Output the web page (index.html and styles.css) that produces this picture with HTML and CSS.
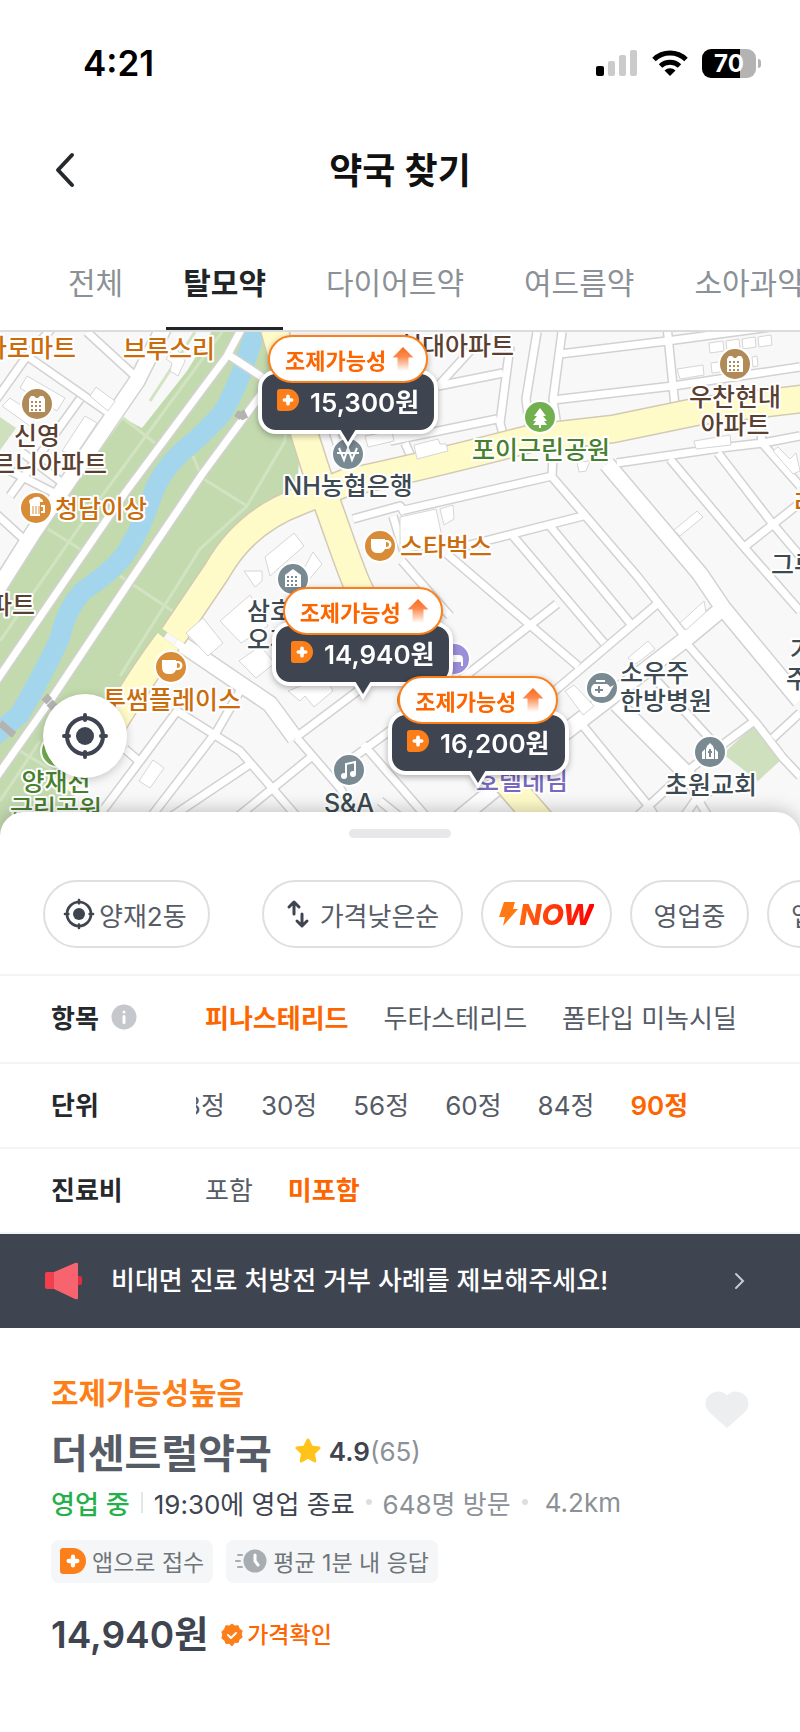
FILE: index.html
```html
<!DOCTYPE html>
<html lang="ko">
<head>
<meta charset="utf-8">
<meta name="viewport" content="width=device-width, initial-scale=1">
<title>약국 찾기</title>
<link rel="stylesheet" href="styles.css">
</head>
<body>

<!-- shared icons -->
<svg class="sprite" aria-hidden="true">
    <defs>
        <linearGradient id="arrowFade" x1="0" y1="0" x2="0" y2="1">
            <stop offset="0" stop-color="#fb6a1c"/>
            <stop offset="0.4" stop-color="#fc8a4c"/>
            <stop offset="1" stop-color="#fff"/>
        </linearGradient>
    </defs>
    <symbol id="i-up" viewBox="0 0 22 24">
        <path d="M11 0 21.500 10.500h-5V24h-11V10.500h-5z" fill="url(#arrowFade)"/>
    </symbol>
    <symbol id="i-app" viewBox="0 0 24 24">
        <path d="M3 0h9a12 12 0 0 1 0 24H3a3 3 0 0 1-3-3V3a3 3 0 0 1 3-3z" fill="#fd7f1a"/>
        <path d="M12 8v8M8 12h8" stroke="#fff" stroke-width="4" stroke-linecap="round"/>
    </symbol>
    <symbol id="i-target" viewBox="0 0 48 48">
        <g fill="none" stroke="#3e4450" stroke-width="4" stroke-linecap="round">
            <circle cx="24" cy="24" r="18"/>
            <path d="M24 3v5M24 40v5M3 24h5M40 24h5"/>
        </g>
        <circle cx="24" cy="24" r="9" fill="#3e4450"/>
    </symbol>
    <symbol id="i-tip" viewBox="0 0 26 20">
        <path d="M2 1 13 19 24 1z" fill="#fff"/>
        <path d="M5 0h16l-8 13z" fill="#3e4450"/>
    </symbol>
</svg>

<div class="status">
    <span class="clock">4:21</span>
    <div class="status-icons">
        <svg width="42" height="28" viewBox="0 0 42 28">
            <rect x="0" y="17" width="8" height="10" rx="2"/>
            <g fill="#cbcbcb">
                <rect x="12" y="12" width="7" height="15" rx="2"/>
                <rect x="23" y="6" width="7" height="21" rx="2"/>
                <rect x="34" y="1" width="7" height="26" rx="2"/>
            </g>
        </svg>
        <svg width="36" height="28" viewBox="0 0 36 28">
            <g fill="none" stroke="#000" stroke-width="5">
                <path d="M2 10.500a23 23 0 0 1 32 0"/>
                <path d="M8.500 17a14 14 0 0 1 19 0"/>
            </g>
            <path d="M12.500 21.500a8 8 0 0 1 11 0L18 27z"/>
        </svg>
        <div class="battery"><span>70</span></div>
    </div>
</div>

<header class="topbar">
    <button class="back" aria-label="뒤로">
        <svg width="22" height="36" viewBox="0 0 22 36"><path d="M18 3 4 18l14 15" fill="none" stroke="#26292c" stroke-width="4" stroke-linecap="round" stroke-linejoin="round"/></svg>
    </button>
    <h1>약국 찾기</h1>
</header>

<nav class="tabs">
    <a href="#">전체</a>
    <a href="#" class="active">탈모약</a>
    <a href="#">다이어트약</a>
    <a href="#">여드름약</a>
    <a href="#">소아과약</a>
</nav>

<div class="map">
    <svg class="map-canvas" viewBox="0 331 800 505" preserveAspectRatio="xMidYMin slice">
        <defs>
            <g id="narrow">
                <path d="M560 353 667 340 800 322M553 399 673 385 800 366M667 325 675 405M537 331 526 398 530 430M562 331 553 399 558 432"/>
                <path d="M510 345 500 422 505 440M438 385 503 372M390 440 497 418M405 442 412 458M400 510 552 475 553 455M553 477 637 575 683 633"/>
                <path d="M617 462 720 447 763 442 800 435M670 458 743 545 800 610M718 452 772 522 800 555M760 420 762 442 800 485M743 547 800 502"/>
                <path d="M458 547 583 515M550 525 630 622M513 535 604 642M447 553 578 665M402 560 450 615M440 695 557 603M470 350 438 385"/>
                <path d="M480 760 557 688 657 603M657 680 712 740M687 643 757 723 783 757 800 775M600 850 683 773 757 718M773 737 800 712M660 850 697 797 717 830"/>
                <path d="M575 715 647 803 665 830M500 770 545 820M560 740 520 790"/>
                <path d="M297 737 340 787 365 830M295 737 367 683 400 655M240 690 217 730 140 830M177 710 240 750 305 825M177 710 140 760 95 820M125 748 141 762"/>
                <path d="M165 820 250 763M235 818 310 757M363 743 430 820M335 770 410 715M380 800 480 880M333 430 348 475M368 440 410 430M353 518 400 505 405 512M393 515 405 555"/>
                <path d="M87 331 135 375 138 385M27 355 113 415M27 355-5 400M80 398 10 495M-5 462 70 500M-5 512 28 542M60 480 20 450M60 318 27 355"/>
            </g>
            <g id="wide">
                <path d="M167 320 137 380 113 415 33 532-10 600"/>
                <path d="M607 463 700 573 723 607 800 700"/>
                <path d="M450 825 560 735 590 712 687 637 723 607"/>
                <path d="M617 703 687 773 705 800"/>
                <path d="M177 640 270 703 295 737"/>
            </g>
            <g id="path">
                <path d="M243 325 227 355 125 492 68 575-5 682M275 372 262 392 203 472 128 583 50 700-10 785M227 353 262 376"/>
            </g>
            <g id="highway">
                <path d="M272 320C290 385 305 440 330 510S355 585 380 625L450 715 545 825"/>
                <path d="M173 635 217 570Q245 520 300 500L345 482Q430 464 533 437L613 428 700 410 810 397" />
            </g>
        </defs>
        <rect y="325" width="800" height="515" fill="#f8f8f8"/>
        <path d="M215 325H268L300 445 296 505 255 520 220 555 165 635 115 715 50 840H-5V600L60 505 123 417 142 427 187 370z" fill="#c3daae"/>
        <path d="M0 416 16 427-2 452zM753 725 782 758 758 780 723 753z" fill="#cfe0bf"/>
        <g fill="none" stroke="#d2e3c2" stroke-width="3">
            <path d="M123 417 155 442M193 455 202 477 247 505 285 440 287 400M247 505 200 548 180 580 120 675M48 528 83 550M120 575 180 615M20 750 70 780M222 331 80 525 0 640M195 331 150 400M0 800 40 740"/>
        </g>
        <!-- river -->
        <path d="M257 325 245 362Q232 398 220 415L197 438Q162 465 152 495T130 545Q120 565 83 590 65 610 60 637 45 670 20 713L-8 737" fill="none" stroke="#a3d6ec" stroke-width="20"/>
        <use href="#narrow" class="casing w11"/>
        <use href="#wide" class="casing w18"/>
        <use href="#path" class="casing w11"/>
        <use href="#narrow" class="road w7"/>
        <use href="#wide" class="road w15"/>
        <use href="#path" class="road w7"/>
        <path d="M120 700 62 785" stroke="#fffbc9" stroke-width="20"/>
        <use href="#highway" class="casing yellow-edge"/>
        <path d="M168 640Q145 670 110 728" class="casing yellow-edge"/>
        <path d="M168 640Q145 670 110 728" class="road yellow"/>
        <use href="#highway" class="road yellow"/>
        <path d="M0 722 14 734M241 410l4 8M237 417l4-6" stroke="#b3b3b0" stroke-width="7"/>
        <path d="M44 701l6-6M49 707l6-6" stroke="#b3b3b0" stroke-width="7"/>
        <!-- buildings -->
        <g fill="#fff" stroke="#d6d6d6">
            <path d="M20 387 27 375 65 397 57 410zM10 397 2 405 30 425 37 415zM62 450 85 415 97 422 75 455zM90 395 96 386 115 400 108 410z"/>
            <path d="M166 358 172 362 170 370 178 375 185 360 175 345zM265 556 294 532 304 545 270 575zM300 575 313 551 322 563 308 580z"/>
            <path d="M677 368 703 364 704 374 680 378zM694 440 730 434 731 444 696 448zM709 342 723 340 724 350 710 352zM726 340 739 338 740 348 727 350zM742 338 755 336 756 346 743 348zM758 336 771 334 772 344 759 346zM711 362 719 361 720 371 712 372zM752 356 757 355 758 365 753 366z"/>
            <path d="M414 444 438 438 440 443 446 443 448 450 417 458zM400 516 436 508 444 545 400 552zM440 508 453 504 454 518 444 524zM577 461 590 460 586 470 579 471zM674 529 697 510 703 516 680 535z"/>
            <path d="M680 622 704 600 706 611 686 629zM628 657 648 640 655 648 636 663zM565 690 574 684 594 705 583 714zM773 450 778 446 790 458 796 452 800 470 793 473z"/>
            <path d="M186 632 203 617 223 642 208 655zM220 620 250 594 268 625 241 642zM239 660 260 645 275 662 256 677zM288 690 300 700 305 695 314 706 333 690 325 675zM139 780 153 759 164 767 150 787z"/>
            <path d="M365 435 392 430 394 440 368 446zM244 570 262 570 262 580 255 586z"/>
        </g>
        <!-- place icons -->
        <g stroke="#fff" stroke-width="2">
            <g fill="#b08a57"><circle cx="37" cy="403" r="16"/><circle cx="735" cy="363" r="16"/></g>
            <g fill="#d98c38"><circle cx="36" cy="507" r="16"/><circle cx="380" cy="545" r="16"/><circle cx="171" cy="666" r="16"/><circle cx="412" cy="699" r="16"/></g>
            <g fill="#72b04f"><circle cx="540" cy="416" r="16"/><circle cx="57" cy="750" r="16"/></g>
            <g fill="#7a8a92"><circle cx="348" cy="453" r="16"/><circle cx="293" cy="578" r="16"/><circle cx="349" cy="769" r="16"/><circle cx="602" cy="687" r="16"/><circle cx="710" cy="751" r="16"/></g>
            <circle cx="454" cy="658" r="16" fill="#9b8fdb"/>
        </g>
        <g fill="#fff">
            <path id="flat" d="M29 411V398l2-3h3l2 2h2l2-2h3l2 3v13z"/>
            <use href="#flat" x="698" y="-40"/>
            <path d="M285 586V574l8-6 8 6v12z"/>
            <path d="M29 501q0-3 3-3 1-2 4-2 4-1 5 2 2 0 2 3h-3v14H30v-12zM41 504h4v8h-4v-2h2v-4h-2z"/>
            <path id="cup" fill-rule="evenodd" d="M371 538h14v1h2a4 4 0 0 1 0 9h-2q-2 4-5 4h-3q-6 0-6-7zM386 541v5q3 0 3-2.500t-3-2.500z"/>
            <use href="#cup" x="-209" y="121"/>
            <path d="M540 407 546 415h-3l4 5h-3l3 4h-6v3h-2v-3h-6l3-4h-3l4-5h-3z"/>
            <path d="M447 654h12q4 0 4 4v7h-2v-4h-14z"/>
            <path d="M596 679h9v2h-9zM594 683h13q2 1 3 3l4-2-3 5q-3 7-7 7h-7q-6-1-6-7 0-4 3-6z"/>
            <path d="M702 758v-7l3-3v10zM706 758V748q1-4 4-6 3 2 4 6v10zM715 758v-10l3 3v7z"/>
        </g>
        <g stroke="#b08a57" stroke-width="2" stroke-dasharray="2 2">
            <path d="M31 401h12M31 405h12M31 409h12M729 361h12M729 365h12M729 369h12"/>
            <path d="M287 576h12M287 580h12M287 584h12" stroke="#7a8a92"/>
        </g>
        <path d="M33 505v8M36 505v8M39 505v8" stroke="#d98c38"/>
        <path d="M339 447l5 12 4-12 4 12 5-12M337 452h22" fill="none" stroke="#fff" stroke-width="2"/>
        <path d="M346 775v-12l9-2v11" fill="none" stroke="#fff" stroke-width="2"/>
        <circle cx="344" cy="775" r="3" fill="#fff"/><circle cx="353" cy="773" r="3" fill="#fff"/>
        <path d="M599 685v7M595 689h8M710 748v8M708 751h4" stroke="#7a8a92" stroke-width="2"/>
        <!-- place names -->
        <g class="place">
            <g class="food">
                <text x="76" y="356" class="end">하나로마트</text>
                <text x="123" y="357">브루스리</text>
                <text x="55" y="517">청담이상</text>
                <text x="400" y="555">스타벅스</text>
                <text x="241" y="708" class="end">투썸플레이스</text>
                <text x="794" y="511">라</text>
            </g>
            <g class="home">
                <text x="514" y="354" class="end">현대아파트</text>
                <text x="37" y="444" class="mid">신영</text>
                <text x="107" y="472" class="end">르니아파트</text>
                <text x="35" y="613" class="end">아파트</text>
                <text x="735" y="405" class="mid">우찬현대</text>
                <text x="735" y="433" class="mid">아파트</text>
            </g>
            <g class="park">
                <text x="541" y="458" class="mid">포이근린공원</text>
                <text x="56" y="790" class="mid">양재천</text>
                <text x="56" y="817" class="mid">근린공원</text>
            </g>
            <g class="office">
                <text x="348" y="494" class="mid">NH농협은행</text>
                <text x="247" y="619">삼호</text>
                <text x="247" y="648">오피</text>
                <text x="349" y="811" class="mid">S&amp;A</text>
                <text x="620" y="681">소우주</text>
                <text x="620" y="709">한방병원</text>
                <text x="711" y="793" class="mid">초원교회</text>
                <text x="771" y="573">그루</text>
                <text x="790" y="658">가</text>
                <text x="786" y="687">주</text>
            </g>
            <text x="522" y="789" class="mid hotel">호텔데님</text>
        </g>
    </svg>

    <button class="pin pin-a">
        <span class="pin-tag">조제가능성<svg width="22" height="24"><use href="#i-up"/></svg></span>
        <span class="pin-price"><svg width="22" height="22"><use href="#i-app"/></svg>15,300원</span>
        <svg class="pin-tip" width="26" height="20"><use href="#i-tip"/></svg>
    </button>
    <button class="pin pin-b">
        <span class="pin-tag">조제가능성<svg width="22" height="24"><use href="#i-up"/></svg></span>
        <span class="pin-price"><svg width="22" height="22"><use href="#i-app"/></svg>14,940원</span>
        <svg class="pin-tip" width="26" height="20"><use href="#i-tip"/></svg>
    </button>
    <button class="pin pin-c">
        <span class="pin-tag">조제가능성<svg width="22" height="24"><use href="#i-up"/></svg></span>
        <span class="pin-price"><svg width="22" height="22"><use href="#i-app"/></svg>16,200원</span>
        <svg class="pin-tip" width="26" height="20"><use href="#i-tip"/></svg>
    </button>

    <button class="locate" aria-label="내 위치"><svg width="48" height="48"><use href="#i-target"/></svg></button>
</div>

<main class="sheet">
    <div class="handle"></div>

    <div class="chips">
        <button class="chip town"><svg width="32" height="32"><use href="#i-target"/></svg>양재2동</button>
        <span class="chips-line"></span>
        <button class="chip">
            <svg width="24" height="30" viewBox="0 0 24 30" fill="none" stroke="#3e4450" stroke-width="3" stroke-linecap="round" stroke-linejoin="round"><path d="M8 15V3M3 8l5-5 5 5M16 15v12M11 22l5 5 5-5"/></svg>가격낮은순
        </button>
        <button class="chip now"><svg width="20" height="24" viewBox="0 0 20 24"><path d="M5 0h11l-2 7h5L4 24l2-9H0z" fill="#ff7a14"/></svg><span>NOW</span></button>
        <button class="chip">영업중</button>
        <button class="chip">앱접수</button>
    </div>

    <div class="filter tall">
        <span class="filter-name">항목
            <svg width="26" height="26" viewBox="0 0 26 26"><circle cx="13" cy="13" r="12.500" fill="#c4c8cc"/><path d="M13 12.500v6M13 8v.1" stroke="#fff" stroke-width="3" stroke-linecap="round"/></svg>
        </span>
        <div class="options">
            <button class="on">피나스테리드</button>
            <button>두타스테리드</button>
            <button>폼타입 미녹시딜</button>
        </div>
    </div>
    <div class="filter">
        <span class="filter-name">단위</span>
        <div class="options scrolled">
            <button>28정</button>
            <button>30정</button>
            <button>56정</button>
            <button>60정</button>
            <button>84정</button>
            <button class="on">90정</button>
        </div>
    </div>
    <div class="filter">
        <span class="filter-name">진료비</span>
        <div class="options">
            <button>포함</button>
            <button class="on">미포함</button>
        </div>
    </div>

    <a href="#" class="banner">
        <svg width="38" height="38" viewBox="0 0 38 38">
            <rect x="30" y="14" width="7" height="9" rx="2" fill="#e02d3c"/>
            <path d="M2 10h10v17H2a2 2 0 0 1-2-2V12a2 2 0 0 1 2-2z" fill="#f23f4e"/>
            <path d="M9 10 30 1q3-1 3 1v34q0 2-3 1L9 27z" fill="#f7646f"/>
        </svg>
        <span>비대면 진료 처방전 거부 사례를 제보해주세요!</span>
        <svg width="12" height="20" viewBox="0 0 12 20"><path d="M2 3l7 7-7 7" fill="none" stroke="#c9ccd1" stroke-width="2" stroke-linecap="round"/></svg>
    </a>

    <article class="card">
        <div class="card-top">
            <strong class="chance">조제가능성높음</strong>
            <button class="like" aria-label="찜">
                <svg width="44" height="38" viewBox="0 0 44 38"><path d="M22 5.500A12.500 12.500 0 0 1 43.500 13.500Q43.500 18 40 22L22 38 4 22Q.5 18 .5 13.500A12.500 12.500 0 0 1 22 5.500z" fill="#edeef0"/></svg>
            </button>
        </div>
        <div class="name-row">
            <h2>더센트럴약국</h2>
            <svg width="26" height="26" viewBox="0 0 26 26"><path d="M13 2l3.300 7 7.700 1-5.600 5.400 1.400 7.600-6.800-3.700L6.200 23l1.400-7.600L2 10l7.700-1z" fill="#ffc31a" stroke="#ffc31a" stroke-width="3" stroke-linejoin="round"/></svg>
            <span class="score">4.9</span><span class="count">(65)</span>
        </div>
        <div class="info">
            <span class="open">영업 중</span>
            <i class="bar"></i>
            <span>19:30에 영업 종료</span>
            <i class="dot"></i>
            <span class="muted">648명 방문</span>
            <i class="dot far"></i>
            <span class="muted">4.2km</span>
        </div>
        <div class="tags">
            <span class="tag"><svg width="26" height="26"><use href="#i-app"/></svg>앱으로 접수</span>
            <span class="tag">
                <svg width="32" height="26" viewBox="0 0 32 26"><circle cx="20" cy="13" r="11.500" fill="#a8adb1"/><path d="M20 7v6l3 4" fill="none" stroke="#fff" stroke-width="3" stroke-linecap="round" stroke-linejoin="round"/><path d="M3 7h4M1 13h4M3 19h4" stroke="#a8adb1" stroke-width="2" stroke-linecap="round"/></svg>평균 1분 내 응답
            </span>
        </div>
        <div class="price-row">
            <strong>14,940원</strong>
            <span class="checked">
                <svg width="24" height="24" viewBox="0 0 24 24"><path d="M12 1l2.800 2 3.400-.2 1.100 3.200 2.900 1.800-1 3.200 1 3.300-2.900 1.900-1.100 3.200-3.400-.1L12 23l-2.800-2.700-3.400.1-1.100-3.200-2.900-1.900 1-3.300-1-3.200L4.700 6l1.100-3.200 3.400.2z" fill="#fd7f1a" stroke="#fd7f1a" stroke-linejoin="round"/><path d="M8 12l3 3 5-5" fill="none" stroke="#fff" stroke-width="2" stroke-linecap="round" stroke-linejoin="round"/></svg>가격확인
            </span>
        </div>
    </article>
</main>

</body>
</html>
```
FILE: styles.css
```css
* {
    box-sizing: border-box;
}

body {
    margin: 0;
    font-family: Inter, "Noto Sans CJK KR", sans-serif;
    font-size: 26px;
    color: #3e4450;
    background: #fff;
    overflow-x: hidden;
}

button {
    font: inherit;
    color: inherit;
    background: none;
    border: none;
    padding: 0;
    cursor: pointer;
    white-space: nowrap;
}

a {
    color: inherit;
    text-decoration: none;
}

svg {
    display: block;
    flex: none;
}

.sprite {
    position: absolute;
    width: 0;
    height: 0;
}

/* status bar */
.status {
    display: flex;
    justify-content: space-between;
    align-items: center;
    height: 126px;
    padding: 0 40px 0 83px;
    color: #000;
}

.clock {
    font-size: 35px;
    font-weight: 600;
}

.status-icons {
    display: flex;
    align-items: center;
    gap: 14px;
}

.battery {
    position: relative;
    width: 54px;
    height: 29px;
    margin-right: 4px;
    border-radius: 9px;
    background: linear-gradient(to right, #000 70%, #b3b3b3 70%);
    color: #fff;
    font-size: 24px;
    font-weight: 700;
    line-height: 29px;
    text-align: center;
}

.battery::after {
    content: '';
    position: absolute;
    right: -5px;
    top: 10px;
    width: 3px;
    height: 9px;
    border-radius: 0 4px 4px 0;
    background: #b3b3b3;
}

/* header */
.topbar {
    display: grid;
    grid-template-columns: 48px 1fr 48px;
    align-items: center;
    height: 88px;
    padding: 0 54px;
}

.topbar h1 {
    margin: 0;
    padding-bottom: 4px;
    font-size: 36px;
    font-weight: 600;
    text-align: center;
    color: #111;
}

.tabs {
    display: flex;
    gap: 26px;
    height: 118px;
    padding: 46px 0 0 51px;
    border-bottom: 2px solid #dadddd;
    overflow: hidden;
}

.tabs a {
    flex: none;
    height: 70px;
    padding: 0 17px;
    font-size: 30px;
    line-height: 46px;
    color: #8b9196;
}

.tabs .active {
    font-weight: 600;
    color: #222528;
    border-bottom: 3px solid #222528;
}

/* map */
.map {
    position: relative;
    height: 505px;
    overflow: hidden;
}

.map-canvas {
    width: 100%;
    height: 100%;
}

.casing,
.road {
    fill: none;
    stroke-linejoin: round;
}

.casing {
    stroke: #d2d2d2;
}

.road {
    stroke: #fff;
}

.w7 {
    stroke-width: 7px;
}

.w11 {
    stroke-width: 10px;
}

.w15 {
    stroke-width: 15px;
}

.w18 {
    stroke-width: 18px;
}

.yellow-edge {
    stroke: #d3cab4;
    stroke-width: 29px;
}

.yellow {
    stroke: #fffbc9;
    stroke-width: 26px;
}

.place text {
    font-size: 25px;
    font-weight: 500;
    stroke: #fff;
    stroke-width: 4px;
    stroke-linejoin: round;
    paint-order: stroke;
}

.mid {
    text-anchor: middle;
}

.end {
    text-anchor: end;
}

.food {
    fill: #cb6c0c;
}

.home {
    fill: #5a4030;
}

.park {
    fill: #47802f;
}

.office {
    fill: #3c4a52;
}

.hotel {
    fill: #7869bd;
}

.pin {
    position: absolute;
    display: flex;
    flex-direction: column;
    align-items: center;
    filter: drop-shadow(0 2px 3px rgba(0, 0, 0, 0.3));
}

.pin-a {
    left: 258px;
    top: 3px;
}

.pin-b {
    left: 272px;
    top: 255px;
}

.pin-c {
    left: 388px;
    top: 344px;
}

.pin-tag {
    position: relative;
    z-index: 1;
    display: flex;
    align-items: center;
    gap: 6px;
    height: 48px;
    margin-bottom: -13px;
    padding: 0 12px 0 15px;
    border: 2px solid #fd7f1a;
    border-radius: 24px;
    background: #fff;
    color: #fd6500;
    font-size: 22px;
    font-weight: 700;
}

.pin-price {
    display: flex;
    align-items: center;
    gap: 11px;
    height: 64px;
    padding: 0 15px 4px;
    border: 4px solid #fff;
    border-radius: 18px;
    background: #3e4450;
    color: #fff;
    font-weight: 600;
}

.pin-tip {
    position: relative;
    margin-top: -5px;
}

.locate {
    position: absolute;
    left: 43px;
    bottom: 59px;
    display: flex;
    align-items: center;
    justify-content: center;
    width: 84px;
    height: 84px;
    border-radius: 50%;
    background: #fff;
    box-shadow: 0 2px 10px rgba(0, 0, 0, 0.2);
}

/* bottom sheet */
.sheet {
    position: relative;
    margin-top: -25px;
    padding-top: 17px;
    border-radius: 24px 24px 0 0;
    background: #fff;
    box-shadow: 0 -2px 18px rgba(0, 0, 0, 0.22);
}

.handle {
    width: 102px;
    height: 9px;
    margin: 0 auto;
    border-radius: 5px;
    background: #e8e8ea;
}

.chips {
    display: flex;
    gap: 18px;
    padding: 42px 0 26px 43px;
    overflow: hidden;
    border-bottom: 2px solid #f3f4f4;
}

.chip {
    flex: none;
    display: flex;
    align-items: center;
    gap: 10px;
    height: 68px;
    padding: 0 22px;
    border: 2px solid #dde0e0;
    border-radius: 34px;
    color: #565c66;
}

.town {
    gap: 4px;
    padding: 0 21px 0 18px;
}

.chips-line {
    width: 2px;
    margin: 0 8px;
    background: #eff0f1;
}

.now {
    gap: 0;
    padding: 0 16px;
}

.now span {
    font-size: 29px;
    font-weight: 800;
    font-style: italic;
    background: linear-gradient(to right, #ff6a10, #ff2a08 60%, #f00);
    -webkit-background-clip: text;
    background-clip: text;
    color: transparent;
}

.filter {
    display: flex;
    height: 85px;
    padding: 0 0 5px 51px;
    border-bottom: 2px solid #f3f4f4;
}

.tall {
    height: 88px;
}

.filter-name {
    flex: none;
    display: flex;
    align-items: center;
    gap: 12px;
    width: 145px;
    font-weight: 600;
    color: #26292c;
}

.options {
    flex: 1;
    display: flex;
    gap: 35px;
    padding-left: 9px;
    overflow: hidden;
    color: #565c66;
}

.options .on {
    font-weight: 600;
    color: #fd6500;
}

.scrolled {
    gap: 36px;
    padding-left: 0;
}

.scrolled button:first-child {
    margin-left: -27px;
}

.banner {
    display: flex;
    align-items: center;
    gap: 28px;
    height: 94px;
    padding: 0 54px 0 45px;
    background: #3e4450;
    color: #fff;
    font-weight: 500;
}

.banner span {
    flex: 1;
    padding-bottom: 5px;
}

/* pharmacy card */
.card {
    padding: 42px 51px;
}

.card-top {
    display: flex;
    justify-content: space-between;
    height: 46px;
}

.chance {
    font-size: 30px;
    line-height: 46px;
    color: #fd7f1a;
}

.like {
    align-self: flex-end;
    margin-bottom: -12px;
}

.name-row {
    display: flex;
    align-items: center;
    height: 70px;
}

.name-row h2 {
    margin: 0 23px 0 0;
    font-size: 40px;
    color: #565c66;
}

.score {
    margin-left: 8px;
    font-weight: 600;
}

.count,
.muted {
    color: #8b9196;
}

.info {
    display: flex;
    align-items: center;
    gap: 11px;
    height: 32px;
    white-space: nowrap;
}

.open {
    color: #24b04b;
    font-weight: 500;
}

.bar {
    width: 2px;
    height: 21px;
    background: #e4e6e8;
}

.dot {
    width: 6px;
    height: 6px;
    border-radius: 50%;
    background: #dcdfe1;
}

.far {
    margin-right: 6px;
}

.tags {
    display: flex;
    gap: 13px;
    margin-top: 22px;
}

.tag {
    display: flex;
    align-items: center;
    gap: 6px;
    height: 43px;
    padding: 0 9px 2px;
    border-radius: 8px;
    background: #f4f6f8;
    color: #6f7578;
    font-size: 23px;
    white-space: nowrap;
}

.price-row {
    display: flex;
    align-items: center;
    gap: 12px;
    margin-top: 24px;
    line-height: 56px;
}

.price-row strong {
    font-size: 37px;
    font-weight: 600;
}

.checked {
    display: flex;
    align-items: center;
    gap: 3px;
    font-size: 23px;
    font-weight: 500;
    color: #fd6500;
}
```
